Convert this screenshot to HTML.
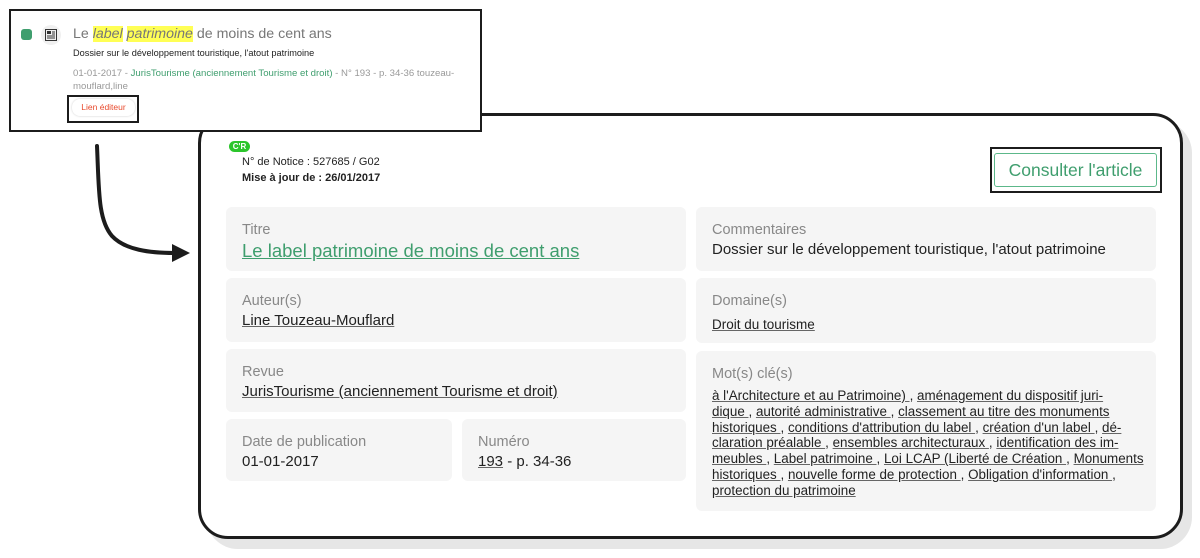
<!DOCTYPE html>
<html><head><meta charset="utf-8"><style>
*{margin:0;padding:0;box-sizing:border-box}
body{width:1200px;height:558px;background:#fff;position:relative;overflow:hidden;font-family:"Liberation Sans","DejaVu Sans",sans-serif;color:#222}
.abs{position:absolute}
.shadow{left:206px;top:121px;width:986px;height:428px;border-radius:32px;background:#e6e6e6}
.card{left:198px;top:113px;width:985px;height:426px;border:3px solid #1c1c1c;border-radius:30px;background:#fff}
.box{position:absolute;background:#f5f5f5;border-radius:6px;padding:14px 16px}
.lab{font-size:14.5px;color:#888;line-height:18px}
.val{font-size:15px;color:#222;line-height:21px}
u{text-decoration:underline;text-decoration-color:#666}
.pop{left:9px;top:9px;width:473px;height:123px;border:2px solid #1c1c1c;background:#fff}
.kw{font-size:13.4px;line-height:15.8px;margin-top:5px;color:#222;white-space:nowrap}
</style></head><body>
<div class="abs shadow"></div>
<div class="abs card"></div>
<div class="abs" style="left:229px;top:141px;width:21px;height:11px;border-radius:6px;background:#2bc52b;color:#fff;font-size:8px;font-weight:bold;line-height:11px;text-align:center">C'R</div>
<div class="abs" style="left:242px;top:154px;font-size:11px;line-height:16px;color:#222">N° de Notice : 527685 / G02<br><b>Mise à jour de : 26/01/2017</b></div>
<div class="abs" style="left:990px;top:147px;width:172px;height:46px;border:2px solid #1c1c1c"></div>
<div class="abs" style="left:994px;top:153px;width:163px;height:34px;border:1px solid #5cb88a;border-radius:3px;color:#3f9e6e;font-size:17.5px;line-height:32px;text-align:center">Consulter l'article</div>

<div class="box" style="left:226px;top:207px;width:460px;height:64px"><div class="lab">Titre</div><div style="font-size:18.5px;color:#3f9e6e;line-height:24px"><u style="text-decoration-color:#3f9e6e">Le label patrimoine de moins de cent ans</u></div></div>
<div class="box" style="left:696px;top:207px;width:460px;height:64px"><div class="lab">Commentaires</div><div class="val">Dossier sur le développement touristique, l'atout patrimoine</div></div>
<div class="box" style="left:226px;top:278px;width:460px;height:64px"><div class="lab">Auteur(s)</div><div class="val"><u>Line Touzeau-Mouflard</u></div></div>
<div class="box" style="left:696px;top:278px;width:460px;height:65px"><div class="lab">Domaine(s)</div><div class="val" style="font-size:13.5px;margin-top:4px"><u>Droit du tourisme</u></div></div>
<div class="box" style="left:226px;top:349px;width:460px;height:63px"><div class="lab">Revue</div><div class="val"><u>JurisTourisme (anciennement Tourisme et droit)</u></div></div>
<div class="box" style="left:696px;top:351px;width:460px;height:160px"><div class="lab">Mot(s) clé(s)</div><div class="kw"><u>à l'Architecture et au Patrimoine) </u>, <u>aménagement du dispositif juri-</u><br><u>dique </u>, <u>autorité administrative </u>, <u>classement au titre des monuments</u><br><u>historiques </u>, <u>conditions d'attribution du label </u>, <u>création d'un label </u>, <u>dé-</u><br><u>claration préalable </u>, <u>ensembles architecturaux </u>, <u>identification des im-</u><br><u>meubles </u>, <u>Label patrimoine </u>, <u>Loi LCAP (Liberté de Création </u>, <u>Monuments</u><br><u>historiques </u>, <u>nouvelle forme de protection </u>, <u>Obligation d'information </u>,<br><u>protection du patrimoine</u></div></div>
<div class="box" style="left:226px;top:419px;width:226px;height:62px"><div class="lab">Date de publication</div><div class="val">01-01-2017</div></div>
<div class="box" style="left:462px;top:419px;width:224px;height:62px"><div class="lab">Numéro</div><div class="val"><u>193</u> - p. 34-36</div></div>

<svg class="abs" style="left:0;top:0" width="200" height="280"><path d="M97 146 C99 190 98 220 112 236 C125 250 150 253 175 253" fill="none" stroke="#1c1c1c" stroke-width="4" stroke-linecap="round"/><path d="M172 244 L190 253 L172 262 Z" fill="#1c1c1c"/></svg>

<div class="abs pop"></div>
<div class="abs" style="left:21px;top:29px;width:11px;height:11px;border-radius:3px;background:#3f9e6e"></div>
<div class="abs" style="left:41px;top:25px;width:20px;height:20px;border-radius:50%;background:#f0f0f0"></div>
<svg class="abs" style="left:45px;top:29px" width="12" height="12"><rect x="0.5" y="0.5" width="11" height="11" fill="none" stroke="#333"/><rect x="2" y="2" width="4" height="3" fill="#333"/><path d="M7 3h3M7 5h3M2 7h8M2 9h8" stroke="#333"/></svg>
<div class="abs" style="left:73px;top:24px;font-size:14.2px;color:#777;line-height:20px">Le <i style="background:#ffff55;color:#777">label</i> <i style="background:#ffff55;color:#777">patrimoine</i> de moins de cent ans</div>
<div class="abs" style="left:73px;top:48px;font-size:9.2px;color:#222">Dossier sur le développement touristique, l'atout patrimoine</div>
<div class="abs" style="left:73px;top:68px;width:395px;font-size:9.6px;line-height:12.5px;color:#999">01-01-2017 - <span style="color:#3f9e6e">JurisTourisme (anciennement Tourisme et droit)</span> - N° 193 - p. 34-36 touzeau-mouflard,line</div>
<div class="abs" style="left:67px;top:95px;width:72px;height:28px;border:2px solid #1c1c1c"></div>
<div class="abs" style="left:72px;top:99px;width:63px;height:17px;border-radius:8px;box-shadow:0 0 2px #ccc;font-size:8.5px;color:#e8492c;text-align:center;line-height:17px">Lien éditeur</div>
</body></html>
